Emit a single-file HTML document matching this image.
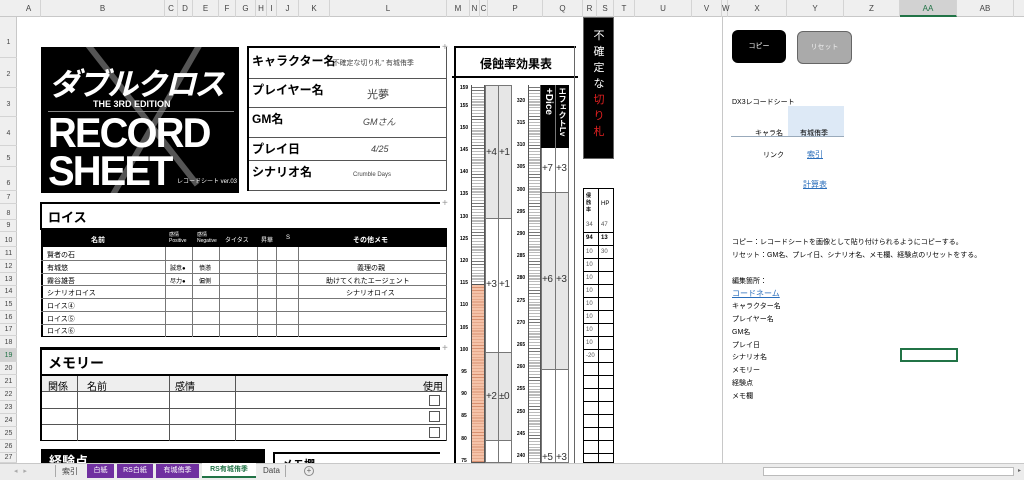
<!DOCTYPE html><html><head><meta charset="utf-8"><style>
*{margin:0;padding:0;box-sizing:border-box}
body{width:1024px;height:480px;overflow:hidden;background:#fff;position:relative;font-family:"Liberation Sans","Noto Sans CJK JP",sans-serif;color:#000}
.a{position:absolute}
.ch{position:absolute;top:0;height:17px;font-size:8px;color:#444;text-align:center;line-height:17px;border-right:1px solid #d4d4d4}
.rh{position:absolute;left:0;width:17px;font-size:7px;color:#444;text-align:center;border-bottom:1px solid #d4d4d4}
.t{font-size:7px;white-space:nowrap}
.b{font-weight:bold}
.hl{position:absolute;height:1px;background:#000}
.vl{position:absolute;width:1px;background:#000}
.rul{position:absolute;background:repeating-linear-gradient(#fff 0,#fff 2.2px,#777 2.2px,#777 2.9px);border-left:1px solid #555;border-right:1px solid #555}
.num{position:absolute;font-size:5px;font-weight:bold;width:14px;text-align:center}
.big{position:absolute;font-size:10px;color:#333;letter-spacing:-0.5px}
</style></head><body>
<div class="a" style="left:0;top:0;width:1024px;height:17px;background:#efefef;border-bottom:1px solid #c8c8c8"></div>
<div class="a" style="left:0;top:17px;width:17px;height:446px;background:#efefef;border-right:1px solid #c8c8c8"></div>
<div class="ch" style="left:17px;width:24px">A</div>
<div class="ch" style="left:41px;width:124px">B</div>
<div class="ch" style="left:165px;width:13px">C</div>
<div class="ch" style="left:178px;width:15px">D</div>
<div class="ch" style="left:193px;width:26px">E</div>
<div class="ch" style="left:219px;width:17px">F</div>
<div class="ch" style="left:236px;width:20px">G</div>
<div class="ch" style="left:256px;width:11px">H</div>
<div class="ch" style="left:267px;width:10px">I</div>
<div class="ch" style="left:277px;width:22px">J</div>
<div class="ch" style="left:299px;width:31px">K</div>
<div class="ch" style="left:330px;width:117px">L</div>
<div class="ch" style="left:447px;width:23px">M</div>
<div class="ch" style="left:470px;width:10px">N</div>
<div class="ch" style="left:480px;width:8px">C</div>
<div class="ch" style="left:488px;width:55px">P</div>
<div class="ch" style="left:543px;width:40px">Q</div>
<div class="ch" style="left:583px;width:14px">R</div>
<div class="ch" style="left:597px;width:17px">S</div>
<div class="ch" style="left:614px;width:21px">T</div>
<div class="ch" style="left:635px;width:57px">U</div>
<div class="ch" style="left:692px;width:30px">V</div>
<div class="ch" style="left:722px;width:6px">W</div>
<div class="ch" style="left:728px;width:59px">X</div>
<div class="ch" style="left:787px;width:57px">Y</div>
<div class="ch" style="left:844px;width:56px">Z</div>
<div class="ch" style="left:900px;width:57px;background:#d2d2d2;border-bottom:2px solid #217346;color:#217346">AA</div>
<div class="ch" style="left:957px;width:57px">AB</div>
<div class="a" style="left:722px;top:17px;width:1px;height:446px;background:#c8c8c8"></div>
<div class="rh" style="top:17px;height:41px;line-height:52px">1</div>
<div class="rh" style="top:58px;height:30px;line-height:34px">2</div>
<div class="rh" style="top:88px;height:29px;line-height:34px">3</div>
<div class="rh" style="top:117px;height:29px;line-height:34px">4</div>
<div class="rh" style="top:146px;height:21px;line-height:26px">5</div>
<div class="rh" style="top:167px;height:24px;line-height:34px">6</div>
<div class="rh" style="top:191px;height:13px;line-height:13px">7</div>
<div class="rh" style="top:204px;height:16px;line-height:20px">8</div>
<div class="rh" style="top:220px;height:12px;line-height:12px">9</div>
<div class="rh" style="top:232px;height:15px;line-height:18px">10</div>
<div class="rh" style="top:247px;height:13px;line-height:13px">11</div>
<div class="rh" style="top:260px;height:13px;line-height:13px">12</div>
<div class="rh" style="top:273px;height:13px;line-height:13px">13</div>
<div class="rh" style="top:286px;height:12px;line-height:12px">14</div>
<div class="rh" style="top:298px;height:13px;line-height:13px">15</div>
<div class="rh" style="top:311px;height:13px;line-height:13px">16</div>
<div class="rh" style="top:324px;height:12px;line-height:12px">17</div>
<div class="rh" style="top:336px;height:13px;line-height:13px">18</div>
<div class="rh" style="top:349px;height:13px;line-height:13px;color:#217346;background:#d2d2d2">19</div>
<div class="rh" style="top:362px;height:13px;line-height:13px">20</div>
<div class="rh" style="top:375px;height:13px;line-height:13px">21</div>
<div class="rh" style="top:388px;height:13px;line-height:13px">22</div>
<div class="rh" style="top:401px;height:13px;line-height:13px">23</div>
<div class="rh" style="top:414px;height:13px;line-height:13px">24</div>
<div class="rh" style="top:427px;height:13px;line-height:13px">25</div>
<div class="rh" style="top:440px;height:13px;line-height:13px">26</div>
<div class="rh" style="top:453px;height:10px;line-height:10px">27</div>

<div class="a" style="left:41px;top:47px;width:198px;height:146px;background:#000;overflow:hidden">
<div class="a" style="left:30px;top:-20px;width:6px;height:200px;background:#555;transform:rotate(-38deg);transform-origin:top"></div>
<div class="a" style="left:160px;top:-10px;width:6px;height:220px;background:#555;transform:rotate(30deg);transform-origin:top"></div>
<div class="a" style="left:8px;top:12px;color:#fff;font-size:31px;font-style:italic;font-weight:bold;letter-spacing:-2px;font-family:'Noto Sans CJK JP',sans-serif">ダブルクロス</div>
<div class="a" style="left:52px;top:52px;color:#fff;font-size:9px;font-weight:bold">THE 3RD EDITION</div>
<div class="a" style="left:7px;top:64px;width:186px;height:1px;background:#888"></div>
<div class="a" style="left:7px;top:64px;color:#fff;font-size:42px;line-height:44px;letter-spacing:-2px;font-weight:bold;transform:scaleX(0.95);transform-origin:left">RECORD</div>
<div class="a" style="left:7px;top:102px;color:#fff;font-size:42px;line-height:44px;letter-spacing:-2px;font-weight:bold;transform:scaleX(0.95);transform-origin:left">SHEET</div>
<div class="a" style="left:136px;top:129px;color:#fff;font-size:6px">レコードシート ver.03</div>
</div>
<div class="a" style="left:247px;top:46px;width:2px;height:145px;background:#000"></div>
<div class="a" style="left:247px;top:46px;width:193px;height:2px;background:#000"></div>
<div class="hl" style="left:249px;top:78px;width:198px;background:#555"></div>
<div class="hl" style="left:249px;top:107px;width:198px;background:#555"></div>
<div class="hl" style="left:249px;top:137px;width:198px;background:#555"></div>
<div class="hl" style="left:249px;top:160px;width:198px;background:#555"></div>
<div class="hl" style="left:249px;top:190px;width:198px;background:#555"></div>
<div class="vl" style="left:446px;top:47px;height:144px;background:#555"></div>
<div class="a t b" style="left:252px;top:52px;font-size:12px">キャラクター名</div>
<div class="a t" style="left:330px;top:58px;font-size:7px;color:#444">"不確定な切り札" 有城侑季</div>
<div class="a t b" style="left:252px;top:81px;font-size:12px">プレイヤー名</div>
<div class="a t" style="left:367px;top:86px;font-size:11px;color:#444">光夢</div>
<div class="a t b" style="left:252px;top:110px;font-size:12px">GM名</div>
<div class="a t" style="left:363px;top:115px;font-size:9px;color:#444;font-style:italic">GMさん</div>
<div class="a t b" style="left:252px;top:140px;font-size:12px">プレイ日</div>
<div class="a t" style="left:371px;top:144px;font-size:9px;color:#444;font-style:italic">4/25</div>
<div class="a t b" style="left:252px;top:163px;font-size:12px">シナリオ名</div>
<div class="a t" style="left:353px;top:172px;font-size:6px;color:#444">Crumble Days</div>
<div class="a" style="left:40px;top:202px;width:400px;height:2px;background:#000"></div>
<div class="a" style="left:40px;top:202px;width:2px;height:28px;background:#000"></div>
<div class="a" style="left:40px;top:228px;width:407px;height:2px;background:#000"></div>
<div class="a t b" style="left:48px;top:207px;font-size:13px">ロイス</div>
<div class="a" style="left:41px;top:230px;width:406px;height:17px;background:#000;color:#fff">
<div class="a t b" style="left:50px;top:5px">名前</div>
<div class="a t" style="left:128px;top:1px;font-size:5px">感情<br>Positive</div>
<div class="a t" style="left:156px;top:1px;font-size:5px">感情<br>Negative</div>
<div class="a t" style="left:184px;top:5px;font-size:6px">タイタス</div>
<div class="a t" style="left:220px;top:5px;font-size:6px">昇華</div>
<div class="a t" style="left:245px;top:5px;font-size:6px">S</div>
<div class="a t b" style="left:312px;top:5px">その他メモ</div>
</div>
<div class="a" style="left:41px;top:247px;width:406px;height:90px;border-left:2px solid #000;border-right:1px solid #555"></div>
<div class="hl" style="left:41px;top:260px;width:406px;background:#777"></div>
<div class="hl" style="left:41px;top:273px;width:406px;background:#777"></div>
<div class="hl" style="left:41px;top:285px;width:406px;background:#777"></div>
<div class="hl" style="left:41px;top:298px;width:406px;background:#777"></div>
<div class="hl" style="left:41px;top:311px;width:406px;background:#777"></div>
<div class="hl" style="left:41px;top:324px;width:406px;background:#777"></div>
<div class="hl" style="left:41px;top:336px;width:406px"></div>
<div class="vl" style="left:165px;top:247px;height:90px;background:#777"></div>
<div class="vl" style="left:192px;top:247px;height:90px;background:#777"></div>
<div class="vl" style="left:219px;top:247px;height:90px;background:#777"></div>
<div class="vl" style="left:257px;top:247px;height:90px;background:#777"></div>
<div class="vl" style="left:276px;top:247px;height:90px;background:#777"></div>
<div class="vl" style="left:298px;top:247px;height:90px;background:#777"></div>
<div class="a t" style="left:47px;top:250px">賢者の石</div>
<div class="a t" style="left:47px;top:263px">有城悠</div>
<div class="a t" style="left:47px;top:276px">霧谷雄吾</div>
<div class="a t" style="left:47px;top:288px">シナリオロイス</div>
<div class="a t" style="left:47px;top:301px">ロイス④</div>
<div class="a t" style="left:47px;top:314px">ロイス⑤</div>
<div class="a t" style="left:47px;top:326px">ロイス⑥</div>
<div class="a t" style="left:170px;top:263px;font-size:6px">誠意●</div>
<div class="a t" style="left:199px;top:263px;font-size:6px">憤懣</div>
<div class="a t" style="left:170px;top:276px;font-size:6px">尽力●</div>
<div class="a t" style="left:199px;top:276px;font-size:6px">偏側</div>
<div class="a t" style="left:357px;top:263px">義理の親</div>
<div class="a t" style="left:326px;top:276px">助けてくれたエージェント</div>
<div class="a t" style="left:346px;top:288px">シナリオロイス</div>
<div class="a" style="left:40px;top:347px;width:400px;height:3px;background:#000"></div>
<div class="a" style="left:40px;top:347px;width:2px;height:94px;background:#000"></div>
<div class="a t b" style="left:48px;top:353px;font-size:14px">メモリー</div>
<div class="a" style="left:40px;top:374px;width:408px;height:2px;background:#000"></div>
<div class="a" style="left:42px;top:376px;width:405px;height:16px;background:#eee;border-bottom:1px solid #555"></div>
<div class="a t" style="left:48px;top:378px;font-size:10px">関係</div>
<div class="a t" style="left:87px;top:378px;font-size:10px">名前</div>
<div class="a t" style="left:175px;top:378px;font-size:10px">感情</div>
<div class="a t" style="left:423px;top:378px;font-size:10px">使用</div>
<div class="hl" style="left:42px;top:408px;width:405px;background:#555"></div>
<div class="hl" style="left:42px;top:424px;width:405px;background:#555"></div>
<div class="hl" style="left:42px;top:440px;width:405px;background:#000"></div>
<div class="vl" style="left:446px;top:376px;height:65px;background:#555"></div>
<div class="vl" style="left:77px;top:376px;height:65px;background:#555"></div>
<div class="vl" style="left:169px;top:376px;height:65px;background:#555"></div>
<div class="vl" style="left:235px;top:376px;height:65px;background:#555"></div>
<div class="a" style="left:429px;top:395px;width:11px;height:11px;border:1px solid #555"></div>
<div class="a" style="left:429px;top:411px;width:11px;height:11px;border:1px solid #555"></div>
<div class="a" style="left:429px;top:427px;width:11px;height:11px;border:1px solid #555"></div>
<div class="a" style="left:41px;top:449px;width:224px;height:14px;background:#000;overflow:hidden"><div class="a t b" style="left:8px;top:2px;color:#fff;font-size:13px">経験点</div></div>
<div class="a" style="left:273px;top:452px;width:167px;height:2px;background:#000"></div>
<div class="a" style="left:273px;top:452px;width:2px;height:11px;background:#000"></div>
<div class="a t b" style="left:282px;top:456px;font-size:11px;height:7px;overflow:hidden">メモ欄</div>
<div class="a t" style="left:442px;top:42px;color:#999;font-size:10px">+</div>
<div class="a t" style="left:442px;top:198px;color:#999;font-size:10px">+</div>
<div class="a t" style="left:442px;top:343px;color:#999;font-size:10px">+</div>

<div class="a" style="left:454px;top:46px;width:2px;height:417px;background:#000"></div>
<div class="a" style="left:454px;top:46px;width:122px;height:2px;background:#000"></div>
<div class="a" style="left:452px;top:76px;width:126px;height:2px;background:#000"></div>
<div class="vl" style="left:574px;top:46px;height:417px;background:#666"></div>
<div class="a t b" style="left:480px;top:55px;font-size:12px">侵蝕率効果表</div>
<div class="rul" style="left:471px;top:85px;width:14px;height:378px"></div>
<div class="a" style="left:471px;top:284px;width:14px;height:179px;background:repeating-linear-gradient(#f5c2a8 0,#f5c2a8 2.2px,#d89070 2.2px,#d89070 2.9px);border:1px solid #555"></div>
<div class="a" style="left:485px;top:85px;width:27px;height:378px;border:1px solid #777;background:#fff"></div>
<div class="a" style="left:485px;top:85px;width:27px;height:134px;background:#e6e6e6;border:1px solid #777"></div>
<div class="a" style="left:485px;top:352px;width:27px;height:89px;background:#e6e6e6;border:1px solid #777"></div>
<div class="vl" style="left:498px;top:85px;height:378px;background:#777"></div>
<div class="big" style="left:486px;top:147px">+4</div><div class="big" style="left:499px;top:147px">+1</div>
<div class="big" style="left:486px;top:279px">+3</div><div class="big" style="left:499px;top:279px">+1</div>
<div class="big" style="left:486px;top:391px">+2</div><div class="big" style="left:499px;top:391px">±0</div>
<div class="rul" style="left:528px;top:85px;width:13px;height:378px"></div>
<div class="a" style="left:541px;top:85px;width:28px;height:378px;border:1px solid #777;background:#fff"></div>
<div class="a" style="left:541px;top:192px;width:28px;height:178px;background:#e6e6e6;border:1px solid #777"></div>
<div class="a" style="left:541px;top:85px;width:28px;height:63px;background:#000"></div>
<div class="vl" style="left:555px;top:85px;height:378px;background:#777"></div>
<div class="a b" style="left:542px;top:88px;width:12px;color:#fff;font-size:10px;writing-mode:vertical-rl;line-height:12px">+Dice</div>
<div class="a b" style="left:556px;top:87px;width:12px;color:#fff;font-size:8px;writing-mode:vertical-rl;line-height:12px">エフェクトLv</div>
<div class="big" style="left:542px;top:163px">+7</div><div class="big" style="left:556px;top:163px">+3</div>
<div class="big" style="left:542px;top:274px">+6</div><div class="big" style="left:556px;top:274px">+3</div>
<div class="big" style="left:542px;top:452px">+5</div><div class="big" style="left:556px;top:452px">+3</div>
<div class="num" style="left:457px;top:85px">159</div><div class="num" style="left:457px;top:103px">155</div>
<div class="num" style="left:457px;top:125px">150</div><div class="num" style="left:457px;top:147px">145</div>
<div class="num" style="left:457px;top:169px">140</div><div class="num" style="left:457px;top:191px">135</div>
<div class="num" style="left:457px;top:214px">130</div><div class="num" style="left:457px;top:236px">125</div>
<div class="num" style="left:457px;top:258px">120</div><div class="num" style="left:457px;top:280px">115</div>
<div class="num" style="left:457px;top:302px">110</div><div class="num" style="left:457px;top:325px">105</div>
<div class="num" style="left:457px;top:347px">100</div><div class="num" style="left:457px;top:369px">95</div>
<div class="num" style="left:457px;top:391px">90</div><div class="num" style="left:457px;top:413px">85</div>
<div class="num" style="left:457px;top:436px">80</div><div class="num" style="left:457px;top:458px">75</div>
<div class="num" style="left:514px;top:98px">320</div><div class="num" style="left:514px;top:120px">315</div>
<div class="num" style="left:514px;top:142px">310</div><div class="num" style="left:514px;top:164px">305</div>
<div class="num" style="left:514px;top:187px">300</div><div class="num" style="left:514px;top:209px">295</div>
<div class="num" style="left:514px;top:231px">290</div><div class="num" style="left:514px;top:253px">285</div>
<div class="num" style="left:514px;top:275px">280</div><div class="num" style="left:514px;top:298px">275</div>
<div class="num" style="left:514px;top:320px">270</div><div class="num" style="left:514px;top:342px">265</div>
<div class="num" style="left:514px;top:364px">260</div><div class="num" style="left:514px;top:386px">255</div>
<div class="num" style="left:514px;top:409px">250</div><div class="num" style="left:514px;top:431px">245</div>
<div class="num" style="left:514px;top:453px">240</div>

<div class="a" style="left:583px;top:17px;width:31px;height:142px;background:#000;border:1px solid #666"></div>
<div class="a" style="left:591px;top:28px;width:16px;color:#fff;font-size:11px;line-height:16px;text-align:center">不<br>確<br>定<br>な<br><span style="color:#e02020">切<br>り<br>札</span></div>
<div class="a" style="left:583px;top:188px;width:31px;height:275px;border:1px solid #000"></div>
<div class="vl" style="left:598px;top:188px;height:275px"></div>
<div class="a t b" style="left:586px;top:193px;font-size:5px;line-height:7px">侵<br>蝕<br>率</div>
<div class="a t" style="left:601px;top:201px;font-size:6px">HP</div>
<div class="a" style="left:583px;top:220px;width:31px;height:243px;background:repeating-linear-gradient(transparent 0,transparent 12px,#000 12px,#000 13px)"></div>
<div class="a t" style="left:586px;top:222px;font-size:6px;color:#555">34</div><div class="a t" style="left:601px;top:222px;font-size:6px;color:#555">47</div>
<div class="a t b" style="left:586px;top:235px;font-size:6px">94</div><div class="a t b" style="left:601px;top:235px;font-size:6px">13</div>
<div class="a t" style="left:586px;top:249px;font-size:6px;color:#555">10</div><div class="a t" style="left:601px;top:249px;font-size:6px;color:#555">30</div>
<div class="a t" style="left:586px;top:262px;font-size:6px;color:#555">10</div>
<div class="a t" style="left:586px;top:275px;font-size:6px;color:#555">10</div>
<div class="a t" style="left:586px;top:288px;font-size:6px;color:#555">10</div>
<div class="a t" style="left:586px;top:301px;font-size:6px;color:#555">10</div>
<div class="a t" style="left:586px;top:314px;font-size:6px;color:#555">10</div>
<div class="a t" style="left:586px;top:327px;font-size:6px;color:#555">10</div>
<div class="a t" style="left:586px;top:340px;font-size:6px;color:#555">10</div>
<div class="a t" style="left:586px;top:353px;font-size:6px;color:#555">-20</div>

<div class="a" style="left:732px;top:30px;width:54px;height:33px;background:#000;border-radius:6px;color:#fff;font-size:7px;text-align:center;line-height:33px">コピー</div>
<div class="a" style="left:797px;top:31px;width:55px;height:33px;background:#aaa;border:1px solid #666;border-radius:6px;color:#eee;font-size:7px;text-align:center;line-height:31px">リセット</div>
<div class="a t" style="left:732px;top:97px">DX3レコードシート</div>
<div class="a" style="left:788px;top:106px;width:56px;height:31px;background:#dde9f6;border-bottom:1px solid #9ab"></div>
<div class="a" style="left:731px;top:136px;width:57px;height:1px;background:#9ab"></div>
<div class="a t" style="left:755px;top:128px">キャラ名</div>
<div class="a t" style="left:800px;top:128px">有城侑季</div>
<div class="a t" style="left:763px;top:150px">リンク</div>
<div class="a t" style="left:807px;top:149px;color:#2a6ebb;text-decoration:underline;font-size:8px">索引</div>
<div class="a t" style="left:803px;top:179px;color:#2a6ebb;text-decoration:underline;font-size:8px">計算表</div>
<div class="a t" style="left:732px;top:237px">コピー：レコードシートを画像として貼り付けられるようにコピーする。</div>
<div class="a t" style="left:732px;top:250px">リセット：GM名、プレイ日、シナリオ名、メモ欄、経験点のリセットをする。</div>
<div class="a t" style="left:732px;top:276px">編集箇所：</div>
<div class="a t" style="left:732px;top:288px;color:#2a6ebb;text-decoration:underline;font-size:8px">コードネーム</div>
<div class="a t" style="left:732px;top:301px">キャラクター名</div>
<div class="a t" style="left:732px;top:314px">プレイヤー名</div>
<div class="a t" style="left:732px;top:327px">GM名</div>
<div class="a t" style="left:732px;top:340px">プレイ日</div>
<div class="a t" style="left:732px;top:352px">シナリオ名</div>
<div class="a t" style="left:732px;top:365px">メモリー</div>
<div class="a t" style="left:732px;top:378px">経験点</div>
<div class="a t" style="left:732px;top:391px">メモ欄</div>
<div class="a" style="left:900px;top:348px;width:58px;height:14px;border:2px solid #217346"></div>

<div class="a" style="left:0;top:463px;width:1024px;height:17px;background:#ececec;border-top:1px solid #c8c8c8"></div>
<div class="a t" style="left:14px;top:467px;color:#aaa">◂ &nbsp; ▸</div>
<div class="a" style="left:55px;top:465px;width:1px;height:12px;background:#aaa"></div>
<div class="a t" style="left:62px;top:466px;font-size:8px;color:#444">索引</div>
<div class="a" style="left:87px;top:464px;width:27px;height:14px;background:#7030a0;color:#fff;font-size:7px;text-align:center;line-height:14px">白紙</div>
<div class="a" style="left:117px;top:464px;width:36px;height:14px;background:#7030a0;color:#fff;font-size:7px;text-align:center;line-height:14px">RS白紙</div>
<div class="a" style="left:156px;top:464px;width:43px;height:14px;background:#7030a0;color:#fff;font-size:7px;text-align:center;line-height:14px">有城侑季</div>
<div class="a" style="left:202px;top:463px;width:54px;height:15px;background:#fff;border-bottom:2px solid #217346;color:#217346;font-size:7px;font-weight:bold;text-align:center;line-height:14px">RS有城侑季</div>
<div class="a t" style="left:263px;top:466px;font-size:8px;color:#444">Data</div>
<div class="a" style="left:285px;top:465px;width:1px;height:12px;background:#aaa"></div>
<div class="a" style="left:304px;top:466px;width:10px;height:10px;border:1px solid #888;border-radius:50%;font-size:8px;line-height:8px;text-align:center;color:#666">+</div>
<div class="a" style="left:763px;top:467px;width:251px;height:9px;background:#fff;border:1px solid #bbb"></div>
<div class="a" style="left:1018px;top:467px;font-size:6px;color:#666">▸</div>
</body></html>
